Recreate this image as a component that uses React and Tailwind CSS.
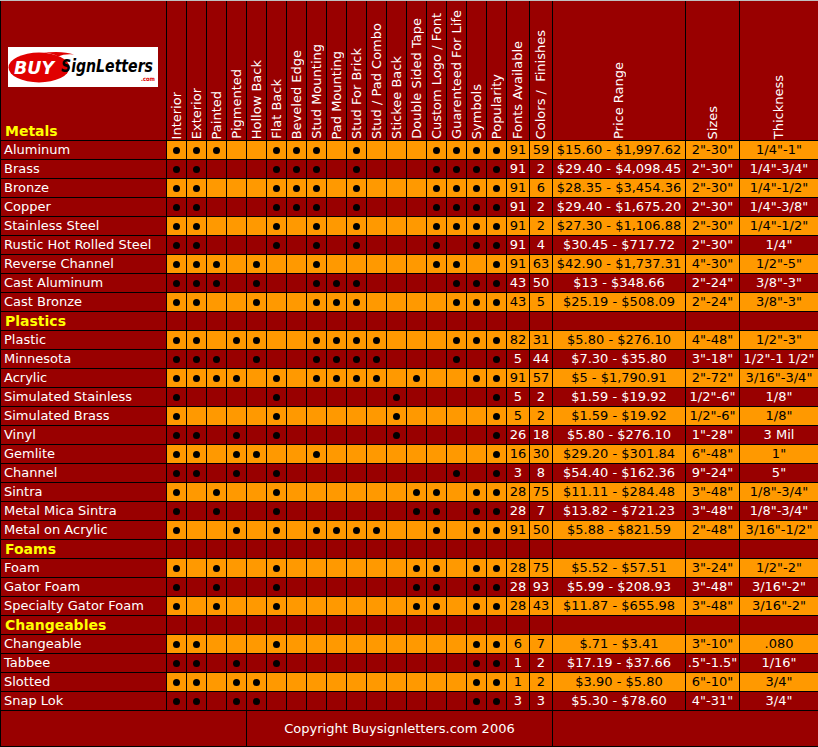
import React from "react";

const columns = [
  "Interior",
  "Exterior",
  "Painted",
  "Pigmented",
  "Hollow Back",
  "Flat Back",
  "Beveled Edge",
  "Stud Mounting",
  "Pad Mounting",
  "Stud For Brick",
  "Stud / Pad Combo",
  "Stickee Back",
  "Double Sided Tape",
  "Custom Logo / Font",
  "Guarenteed For Life",
  "Symbols",
  "Popularity",
  "Fonts Available",
  "Colors /\u00a0 Finishes",
  "Price Range",
  "Sizes",
  "Thickness",
];

const sections = [
  {
    title: "Metals",
    rows: [
      ["Aluminum", [0, 1, 2, 5, 6, 7, 9, 13, 14, 15, 16], 91, 59, "$15.60 - $1,997.62", '2"-30"', '1/4"-1"'],
      ["Brass", [0, 1, 5, 6, 7, 9, 13, 14, 15, 16], 91, 2, "$29.40 - $4,098.45", '2"-30"', '1/4"-3/4"'],
      ["Bronze", [0, 1, 5, 6, 7, 9, 13, 14, 15, 16], 91, 6, "$28.35 - $3,454.36", '2"-30"', '1/4"-1/2"'],
      ["Copper", [0, 1, 5, 6, 7, 9, 13, 14, 15, 16], 91, 2, "$29.40 - $1,675.20", '2"-30"', '1/4"-3/8"'],
      ["Stainless Steel", [0, 1, 5, 7, 9, 13, 14, 15, 16], 91, 2, "$27.30 - $1,106.88", '2"-30"', '1/4"-1/2"'],
      ["Rustic Hot Rolled Steel", [0, 1, 5, 7, 9, 13, 15, 16], 91, 4, "$30.45 - $717.72", '2"-30"', '1/4"'],
      ["Reverse Channel", [0, 1, 2, 4, 7, 13, 14, 16], 91, 63, "$42.90 - $1,737.31", '4"-30"', '1/2"-5"'],
      ["Cast Aluminum", [0, 1, 2, 4, 7, 8, 9, 14, 15, 16], 43, 50, "$13 - $348.66", '2"-24"', '3/8"-3"'],
      ["Cast Bronze", [0, 1, 4, 7, 8, 9, 14, 15, 16], 43, 5, "$25.19 - $508.09", '2"-24"', '3/8"-3"'],
    ],
  },
  {
    title: "Plastics",
    rows: [
      ["Plastic", [0, 1, 3, 4, 7, 8, 9, 10, 14, 15, 16], 82, 31, "$5.80 - $276.10", '4"-48"', '1/2"-3"'],
      ["Minnesota", [0, 1, 2, 4, 7, 8, 9, 10, 14, 16], 5, 44, "$7.30 - $35.80", '3"-18"', '1/2"-1 1/2"'],
      ["Acrylic", [0, 1, 2, 3, 5, 7, 8, 9, 10, 12, 15, 16], 91, 57, "$5 - $1,790.91", '2"-72"', '3/16"-3/4"'],
      ["Simulated Stainless", [0, 5, 11, 16], 5, 2, "$1.59 - $19.92", '1/2"-6"', '1/8"'],
      ["Simulated Brass", [0, 5, 11, 16], 5, 2, "$1.59 - $19.92", '1/2"-6"', '1/8"'],
      ["Vinyl", [0, 1, 3, 5, 11, 16], 26, 18, "$5.80 - $276.10", '1"-28"', "3 Mil"],
      ["Gemlite", [0, 1, 3, 4, 7, 16], 16, 30, "$29.20 - $301.84", '6"-48"', '1"'],
      ["Channel", [0, 1, 3, 5, 14, 16], 3, 8, "$54.40 - $162.36", '9"-24"', '5"'],
      ["Sintra", [0, 2, 5, 12, 13, 15, 16], 28, 75, "$11.11 - $284.48", '3"-48"', '1/8"-3/4"'],
      ["Metal Mica Sintra", [0, 2, 5, 12, 13, 15, 16], 28, 7, "$13.82 - $721.23", '3"-48"', '1/8"-3/4"'],
      ["Metal on Acrylic", [0, 3, 5, 7, 8, 9, 10, 13, 15, 16], 91, 50, "$5.88 - $821.59", '2"-48"', '3/16"-1/2"'],
    ],
  },
  {
    title: "Foams",
    rows: [
      ["Foam", [0, 2, 5, 12, 13, 15, 16], 28, 75, "$5.52 - $57.51", '3"-24"', '1/2"-2"'],
      ["Gator Foam", [0, 2, 5, 12, 13, 15, 16], 28, 93, "$5.99 - $208.93", '3"-48"', '3/16"-2"'],
      ["Specialty Gator Foam", [0, 2, 5, 12, 13, 15, 16], 28, 43, "$11.87 - $655.98", '3"-48"', '3/16"-2"'],
    ],
  },
  {
    title: "Changeables",
    rows: [
      ["Changeable", [0, 1, 5, 15, 16], 6, 7, "$.71 - $3.41", '3"-10"', ".080"],
      ["Tabbee", [0, 1, 3, 5, 15, 16], 1, 2, "$17.19 - $37.66", '.5"-1.5"', '1/16"'],
      ["Slotted", [0, 1, 3, 4, 15, 16], 1, 2, "$3.90 - $5.80", '6"-10"', '3/4"'],
      ["Snap Lok", [0, 1, 3, 4, 15, 16], 3, 3, "$5.30 - $78.60", '4"-31"', '3/4"'],
    ],
  },
];

const dotCols = Array.from({ length: 17 }, (_, i) => i);

function Logo() {
  return (
    <svg width="150" height="40" viewBox="0 0 150 40" className="block bg-white">
      <ellipse cx="31" cy="20.5" rx="30.5" ry="15" fill="#e00000" />
      <path d="M36 5.6 Q55 3.5 66 7.5 Q56 6.8 50 9.5 Q45 6.5 36 5.6 Z" fill="#e00000" />
      <text
        x="6"
        y="27"
        fill="#fff"
        fontFamily="DejaVu Sans, sans-serif"
        fontWeight="bold"
        fontStyle="italic"
        fontSize="18"
        textLength="40"
        lengthAdjust="spacingAndGlyphs"
      >
        BUY
      </text>
      <text
        x="53"
        y="25"
        fill="#000"
        fontFamily="DejaVu Sans, sans-serif"
        fontWeight="bold"
        fontStyle="italic"
        fontSize="18"
        textLength="92"
        lengthAdjust="spacingAndGlyphs"
      >
        SignLetters
      </text>
      <text
        x="133"
        y="33.5"
        fill="#e00000"
        fontFamily="DejaVu Sans, sans-serif"
        fontWeight="bold"
        fontSize="6"
        textLength="14"
        lengthAdjust="spacingAndGlyphs"
      >
        .com
      </text>
    </svg>
  );
}

function HeaderCell({ label }) {
  return (
    <div className="bg-[#990000] h-[139px] overflow-hidden flex flex-col justify-end items-center pb-[1px]">
      <span className="[writing-mode:vertical-rl] rotate-180 whitespace-nowrap text-white text-[13px] leading-[18px]">
        {label}
      </span>
    </div>
  );
}

function Row({ row, orange }) {
  const [name, dots, fonts, colors, price, sizes, thickness] = row;
  const cell = orange ? "bg-[#ff9900] text-black" : "bg-[#990000] text-white";
  return (
    <>
      <div className="bg-[#990000] text-white h-[18px] leading-[18px] pl-[3px] whitespace-nowrap overflow-hidden">
        {name}
      </div>
      {dotCols.map((c) => (
        <div key={c} className={`${cell} h-[18px] flex items-center justify-center`}>
          {dots.includes(c) && <div className="w-[7px] h-[7px] rounded-full bg-black" />}
        </div>
      ))}
      {[fonts, colors, price, sizes, thickness].map((v, i) => (
        <div key={i} className={`${cell} h-[18px] leading-[18px] text-center whitespace-nowrap overflow-hidden`}>
          {v}
        </div>
      ))}
    </>
  );
}

function SectionRow({ title }) {
  return (
    <>
      <div className="bg-[#990000] text-[#ffff00] font-bold text-[14px] h-[18px] leading-[18px] pl-[4px]">
        {title}
      </div>
      {Array.from({ length: 22 }, (_, i) => (
        <div key={i} className="bg-[#990000] h-[18px]" />
      ))}
    </>
  );
}

export default function App() {
  return (
    <div className="w-[818px] h-[747px] overflow-hidden border-t border-[#c0c0c0] [font-family:'DejaVu_Sans',sans-serif] text-[13px]">
      <div className="w-[819px] grid grid-cols-[165px_repeat(17,19px)_22px_22px_132px_53px_78px] gap-px bg-black pl-px pr-px pb-px">
        {/* header */}
        <div className="bg-[#990000] h-[139px] flex flex-col pt-[46px] pl-[4px]">
          <div className="ml-[3px]">
            <Logo />
          </div>
          <div className="mt-auto text-[#ffff00] font-bold text-[14px] leading-[18px]">Metals</div>
        </div>
        {columns.map((c) => (
          <HeaderCell key={c} label={c} />
        ))}

        {sections.map((s, si) => (
          <React.Fragment key={s.title}>
            {si > 0 && <SectionRow title={s.title} />}
            {s.rows.map((r, ri) => (
              <Row key={r[0]} row={r} orange={ri % 2 === 0} />
            ))}
          </React.Fragment>
        ))}

        {/* footer */}
        <div className="col-span-5 bg-[#990000] h-[35px]" />
        <div className="col-span-15 bg-[#990000] h-[35px] flex items-center justify-center text-white">
          Copyright Buysignletters.com 2006
        </div>
        <div className="col-span-3 bg-[#990000] h-[35px]" />
      </div>
    </div>
  );
}
